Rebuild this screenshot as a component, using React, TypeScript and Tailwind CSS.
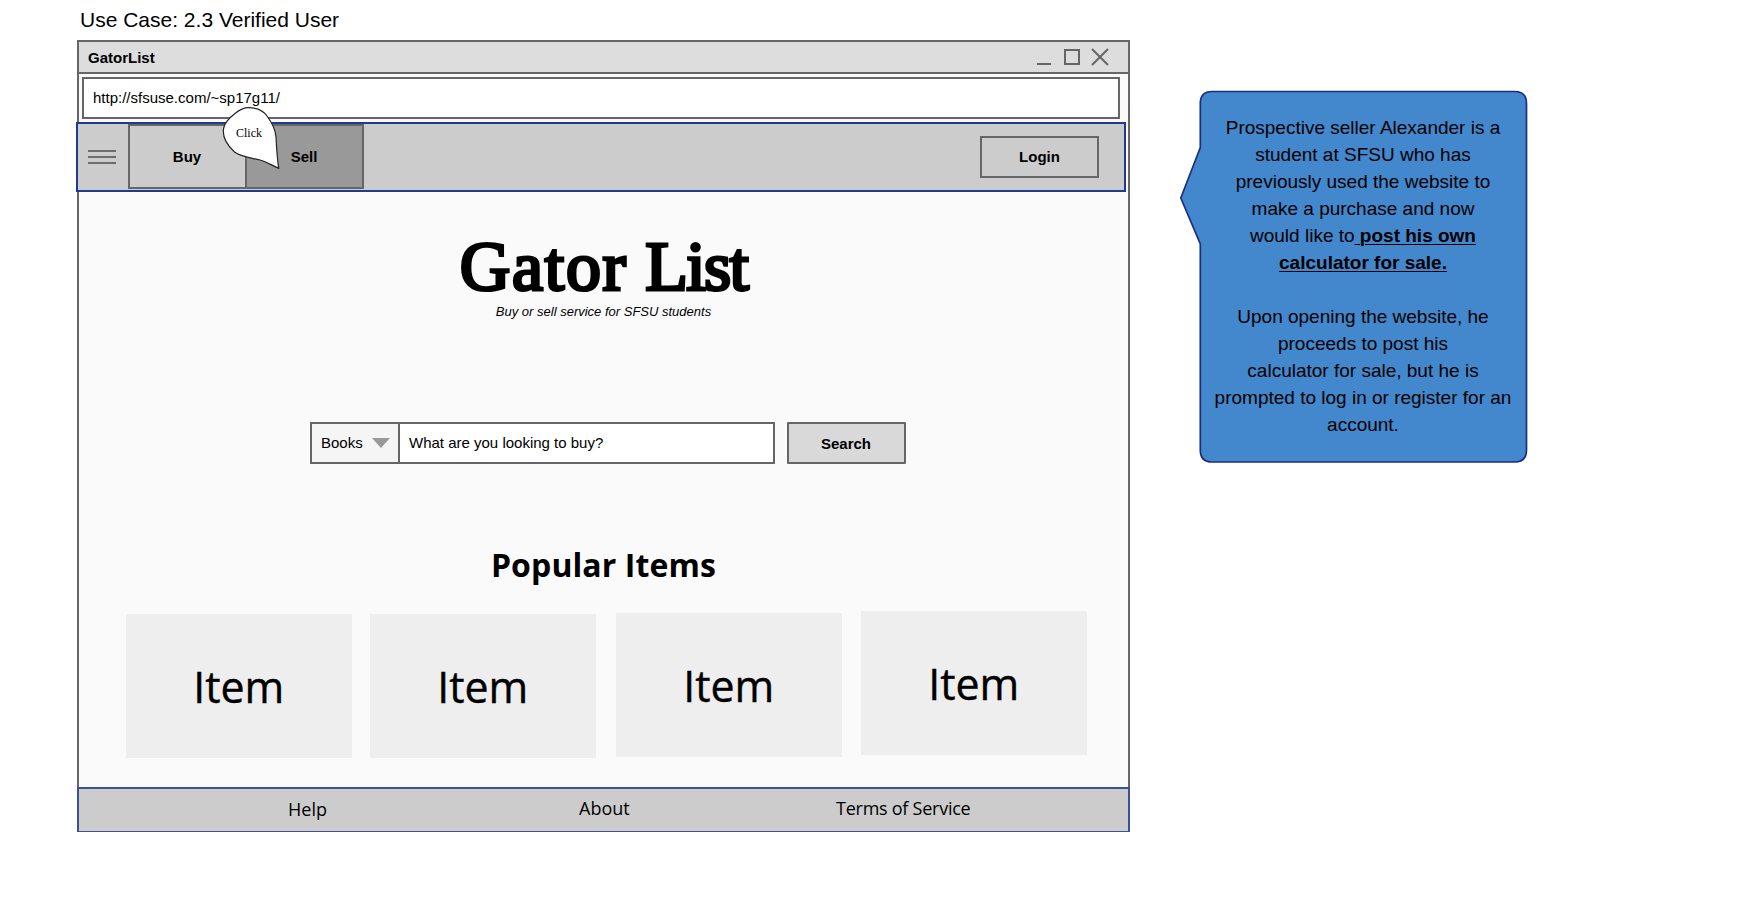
const items = [
  { name: 'Item', cell: 'ml-0 mt-[3px]' },
  { name: 'Item', cell: 'ml-[18px] mt-[3px]' },
  { name: 'Item', cell: 'ml-[20px] mt-[2px]' },
  { name: 'Item', cell: 'ml-[19px] mt-0' },
];

function TitleBar() {
  return (
    <div className="flex h-[34px] items-center justify-between border-2 border-[#666] bg-[#ddd] pr-[18.500px] pl-[9px]">
      <span className="pt-[2px] text-[15px] leading-[18px] font-bold">GatorList</span>
      <svg width="74" height="20" viewBox="0 0 74 20" fill="none" stroke="#666" strokeWidth="2">
        <path d="M1 17H15" />
        <rect x="29" y="3" width="14" height="14" />
        <path d="M56 2L72 18M72 2L56 18" />
      </svg>
    </div>
  );
}

function NavBar() {
  return (
    <nav className="-ml-[3px] mt-[3.5px] flex h-[70px] w-[1050px] items-start border-2 border-[#1f3a8f] bg-[#ccc]">
      <svg width="28" height="16" viewBox="0 0 28 16" stroke="#4d4d4d" strokeWidth="1.600" className="mt-[24.5px] ml-[10px]">
        <path d="M0 2H28M0 8H28M0 14H28" />
      </svg>
      <div className="ml-[12px] flex h-[65px] border-2 border-[#666] text-[15px] font-bold">
        <div className="flex w-[115px] items-center justify-center pt-[2px] pr-px">Buy</div>
        <div className="flex w-[117px] items-center justify-center border-l-2 border-[#666] bg-[#999] pt-[2px] pr-px">Sell</div>
      </div>
      <div className="mt-[12px] mr-[25px] ml-auto flex h-[42px] w-[119px] items-center justify-center border-2 border-[#666] pt-[1px] text-[15px] font-bold">
        Login
      </div>
    </nav>
  );
}

function SearchRow() {
  return (
    <div className="mt-[102px] ml-[231px] flex h-[42px] text-[15px]">
      <div className="flex w-[465px] border-2 border-[#666] bg-white">
        <div className="flex w-[88px] items-center border-r-2 border-[#666] bg-[#f5f5f5] pl-[9px]">
          <span>Books</span>
          <svg width="18" height="10" viewBox="0 0 18 10" className="ml-[9px]">
            <path d="M0 0H18L9 10Z" fill="#999" />
          </svg>
        </div>
        <div className="flex items-center pl-[9px]">What are you looking to buy?</div>
      </div>
      <div className="ml-[12px] flex w-[119px] items-center justify-center rounded-[1px] border-2 border-[#666] bg-[#d9d9d9] pt-[2px] pr-px font-bold">
        Search
      </div>
    </div>
  );
}

function ClickBubble() {
  return (
    <div className="absolute top-[106px] left-[222px] h-[64px] w-[60px]">
      <svg width="60" height="64" viewBox="222 106 60 64" className="absolute inset-0">
        <path
          d="M248.3 107.7C257 107.7 263 110.500 267 116C272.500 123.500 275.500 130 276 137C276.500 147 277 157 278.700 168.300C272 165.500 267 162 260 160C250 157.500 241 157 234.500 152C228 146 223.300 139 223.300 131.500C223.300 123 230 117.500 235 113.500C239 110.300 243 107.700 248.300 107.700Z"
          fill="#fff"
          stroke="#222"
          strokeWidth="1.2"
        />
      </svg>
      <span className="absolute top-[19px] left-[14px] font-['Liberation_Serif',serif] text-[12px] leading-[16px]">Click</span>
    </div>
  );
}

function Callout() {
  return (
    <aside className="relative mt-[90px] ml-[50px] h-[374px] w-[349px]">
      <svg width="349" height="374" viewBox="1180 90 349 374" className="absolute inset-0">
        <path
          d="M1212 91.500H1514.500Q1526.500 91.500 1526.500 103.500V450Q1526.500 462 1514.500 462H1212Q1200.300 462 1200.300 450V244L1180.800 198L1200.300 147.500V103.500Q1200.300 91.500 1212 91.500Z"
          fill="#4387cc"
          stroke="#1b2f80"
          strokeWidth="1.700"
        />
      </svg>
      <p className="relative mr-[3px] ml-[20px] pt-[24px] text-center text-[19px] leading-[27px] whitespace-nowrap">
        Prospective seller Alexander is a<br />
        student at SFSU who has<br />
        previously used the website to<br />
        make a purchase and now<br />
        would like to<b className="underline decoration-1 underline-offset-2"> post his own</b><br />
        <b className="underline decoration-1 underline-offset-2">calculator for sale.</b><br />
        <br />
        Upon opening the website, he<br />
        proceeds to post his<br />
        calculator for sale, but he is<br />
        prompted to log in or register for an<br />
        account.
      </p>
    </aside>
  );
}

export default function App() {
  return (
    <div className="relative flex h-[899px] w-[1747px] overflow-hidden bg-white pl-[77px] font-['Liberation_Sans',Arial,sans-serif] text-black">
      <div className="w-[1053px] shrink-0">
        <h1 className="h-[40px] pt-[8px] pl-[3px] text-[21px] leading-[24px]">Use Case: 2.3 Verified User</h1>
        <TitleBar />
        <main className="h-[713px] border-x-2 border-[#666] bg-[#fafafa] pt-[3px]">
          <div className="ml-[3px] flex h-[41.5px] w-[1038px] items-center border-2 border-[#666] bg-white pl-[9px] text-[15px]">
            http://sfsuse.com/~sp17g11/
          </div>
          <NavBar />
          <h2 className="mt-[41px] flex h-[68px] items-center justify-center font-['Liberation_Serif',serif] text-[70px] leading-[68px] font-normal [-webkit-text-stroke:3.2px_black]">
            <span className="whitespace-nowrap">
              <span className="tracking-[1.7px]">Gator</span> <span className="tracking-[-1.7px]">List</span>
            </span>
          </h2>
          <p className="mt-[3px] text-center text-[13px] leading-[16px] italic">Buy or sell service for SFSU students</p>
          <SearchRow />
          <h3 className="mt-[79px] text-center font-['Open_Sans',sans-serif] text-[32px] leading-[44px] font-bold tracking-[0.1px]">Popular Items</h3>
          <div className="mt-[24px] ml-[46.500px] flex items-start">
            {items.map((item, i) => (
              <div
                key={i}
                className={`flex h-[144px] w-[226px] items-center justify-center bg-[#eee] pb-px font-['Open_Sans',sans-serif] text-[44px] leading-[60px] [-webkit-text-stroke:0.4px_black] ${item.cell}`}
              >
                <span className="scale-x-[0.975]">{item.name}</span>
              </div>
            ))}
          </div>
        </main>
        <footer className="flex h-[45px] border-2 border-b-[1px] border-[#3b5096] bg-[#ccc] pt-[6px] font-['Open_Sans',sans-serif] text-[18px] leading-[26px]">
          <span className="ml-[209px] w-[291px] pt-[1px]">Help</span>
          <span className="w-[257px]">About</span>
          <span className="tracking-[-0.25px]">Terms of Service</span>
        </footer>
      </div>
      <Callout />
      <ClickBubble />
    </div>
  );
}
